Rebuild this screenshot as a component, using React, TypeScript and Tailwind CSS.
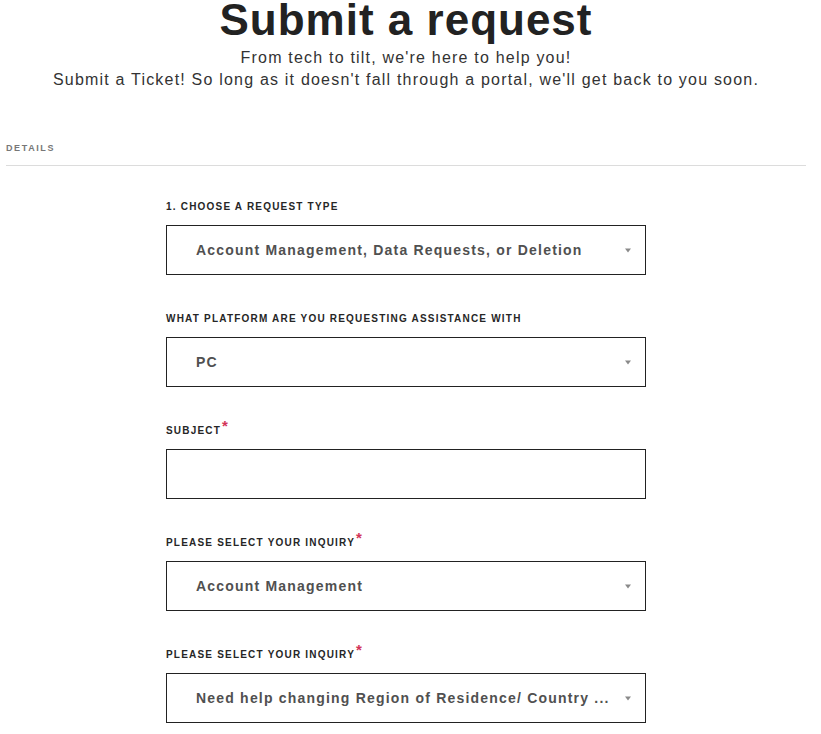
const FIELDS: { label: string; required?: boolean; value?: string; select: boolean }[] = [
  { label: '1. Choose a request type', value: 'Account Management, Data Requests, or Deletion', select: true },
  { label: 'What platform are you requesting assistance with', value: 'PC', select: true },
  { label: 'Subject', required: true, select: false },
  { label: 'Please select your inquiry', required: true, value: 'Account Management', select: true },
  { label: 'Please select your inquiry', required: true, value: 'Need help changing Region of Residence/ Country ...', select: true },
];

function Caret() {
  return (
    <svg width="6" height="5" viewBox="0 0 6 5" className="shrink-0">
      <path d="M0 0.5 L6 0.5 L3 4.5 Z" fill="#8a8a8a" />
    </svg>
  );
}

export default function App() {
  return (
    <div
      className="h-[734px] overflow-hidden bg-white text-[#222]"
      style={{ fontFamily: '"Liberation Sans", Arial, sans-serif' }}
    >
      <div className="ml-[6px] w-[800px]">
        {/* Header */}
        <h1 className="text-center text-[44px] leading-[40px] font-bold tracking-[1px] text-[#222]">
          Submit a request
        </h1>
        <div className="mt-[7px] text-center text-[16px] leading-[22px] tracking-[1.2px] text-[#333]">
          <p>From tech to tilt, we're here to help you!</p>
          <p>Submit a Ticket! So long as it doesn't fall through a portal, we'll get back to you soon.</p>
        </div>

        {/* Section heading */}
        <div className="mt-[51px] border-b border-[#dcdcdc] pb-[11px]">
          <p className="text-[9px] leading-[12px] font-bold tracking-[1.6px] text-[#777] uppercase">Details</p>
        </div>

        {/* Form */}
        <div className="mx-auto mt-[35px] w-[480px]">
          {FIELDS.map((f, i) => (
            <div key={i} className="mb-[38px]">
              <div className="h-[12px] text-[10px] leading-[12px] font-bold tracking-[1.2px] uppercase text-[#262626] whitespace-nowrap">
                {f.label}
                {f.required && (
                  <span className="relative top-[-3px] ml-[1px] text-[15px] leading-[0] text-[#d33459]">*</span>
                )}
              </div>
              <div className="mt-[12px] flex h-[50px] items-center border border-[#222] pl-[29px] pr-[14px]">
                {f.select && (
                  <>
                    <span className="flex-1 truncate text-[14px] font-bold tracking-[1.2px] text-[#505050]">
                      {f.value}
                    </span>
                    <Caret />
                  </>
                )}
              </div>
            </div>
          ))}
        </div>
      </div>
    </div>
  );
}
